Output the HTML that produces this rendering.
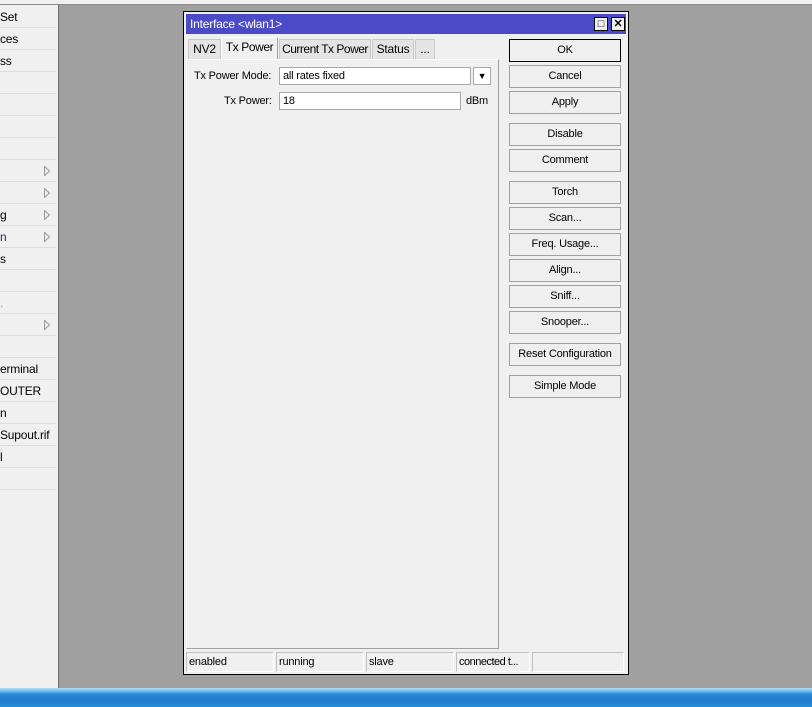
<!DOCTYPE html>
<html><head><style>
*{margin:0;padding:0;box-sizing:border-box}
body{width:812px;height:707px;overflow:hidden;background:#a0a0a0;font-family:"Liberation Sans",sans-serif;font-size:11px;letter-spacing:-0.2px;color:#000;position:relative}
.a{position:absolute;white-space:nowrap}
.side{left:0;top:5px;width:59px;height:683px;background:#f0f0f0;border-right:1px solid #6f6f6f}
.row{position:absolute;left:0;width:56px;height:22px;border-bottom:1px solid #dcdcdc;line-height:22px;white-space:nowrap;overflow:hidden;font-size:12px}
.arr{position:absolute;left:44px;top:6px;width:6px;height:10px}
.dlg{left:183px;top:11px;width:446px;height:664px;background:#f0f0f0;border:1px solid #000}
.title{left:2px;top:2px;width:440px;height:20px;background:#4b4bc8;color:#fff;line-height:20px;padding-left:4px;font-size:12px}
.tb{position:absolute;top:3px;width:14px;height:14px;background:#f0f0f0;border:1px solid #000;color:#000;font-size:11px;line-height:12px;text-align:center;font-weight:bold}
.tab{position:absolute;top:27px;height:20px;border:1px solid #c8c8c8;border-bottom:none;background:#e4e4e4;line-height:19px;text-align:center;white-space:nowrap;font-size:12px}
.panel{left:2px;top:47px;width:313px;height:590px;border:1px solid #a0a0a0;border-top:1px solid #fff;border-left:1px solid #fff;background:#f0f0f0}
.btn{position:absolute;left:325px;width:112px;height:23px;border:1px solid #a0a0a0;background:#efefef;text-align:center;line-height:21px;white-space:nowrap}
.in{position:absolute;height:18px;background:#fff;border:1px solid #a8a8a8;line-height:16px;padding-left:3px;white-space:nowrap}
.st{position:absolute;top:640px;height:20px;border:1px solid #c0c0c0;border-right-color:#fff;border-bottom-color:#fff;line-height:18px;padding-left:2px;white-space:nowrap;overflow:hidden}
.task{left:0;top:688px;width:812px;height:19px;background:linear-gradient(#b8d8f0 0,#6cc4ee 3px,#2a8ad8 6px,#1e78c8 12px,#2c90dc 19px)}
</style></head><body>
<div class="a" style="left:0;top:0;width:812px;height:5px;background:#f0f0f0;border-bottom:1px solid #8a8a8a"></div>
<div class="a side">
<div class="row" style="top:1px">Set</div>
<div class="row" style="top:23px">ces</div>
<div class="row" style="top:45px">ss</div>
<div class="row" style="top:67px"></div>
<div class="row" style="top:89px"></div>
<div class="row" style="top:111px"></div>
<div class="row" style="top:133px"></div>
<div class="row" style="top:155px"><svg class="arr" viewBox="0 0 6 10"><path d="M0.5 0v10M0.5 0.5L5.5 5L0.5 9.5" fill="none" stroke="#999"/></svg></div>
<div class="row" style="top:177px"><svg class="arr" viewBox="0 0 6 10"><path d="M0.5 0v10M0.5 0.5L5.5 5L0.5 9.5" fill="none" stroke="#999"/></svg></div>
<div class="row" style="top:199px">g<svg class="arr" viewBox="0 0 6 10"><path d="M0.5 0v10M0.5 0.5L5.5 5L0.5 9.5" fill="none" stroke="#999"/></svg></div>
<div class="row" style="top:221px;color:#1a2a8a">n<svg class="arr" viewBox="0 0 6 10"><path d="M0.5 0v10M0.5 0.5L5.5 5L0.5 9.5" fill="none" stroke="#999"/></svg></div>
<div class="row" style="top:243px">s</div>
<div class="row" style="top:265px"></div>
<div class="row" style="top:287px;color:#7ab">.</div>
<div class="row" style="top:309px"><svg class="arr" viewBox="0 0 6 10"><path d="M0.5 0v10M0.5 0.5L5.5 5L0.5 9.5" fill="none" stroke="#999"/></svg></div>
<div class="row" style="top:331px"></div>
<div class="row" style="top:353px">erminal</div>
<div class="row" style="top:375px">OUTER</div>
<div class="row" style="top:397px">n</div>
<div class="row" style="top:419px">Supout.rif</div>
<div class="row" style="top:441px">l</div>
<div class="row" style="top:463px"></div>
</div>
<div class="a dlg">
<div class="a title">Interface &lt;wlan1&gt;
<div class="tb" style="left:408px">&#9633;</div><div class="tb" style="left:425px">✕</div></div>
<div class="tab" style="left:4px;width:33px">NV2</div>
<div class="tab" style="left:37px;width:57px;top:25px;height:23px;background:#f0f0f0;border-color:#fff #a0a0a0 #f0f0f0 #fff;letter-spacing:-0.4px">Tx Power</div>
<div class="tab" style="left:95px;width:92px;letter-spacing:-0.5px">Current Tx Power</div>
<div class="tab" style="left:188px;width:42px">Status</div>
<div class="tab" style="left:231px;width:20px">...</div>
<div class="a panel">
<div class="a" style="left:7px;top:10px">Tx Power Mode:</div>
<div class="in" style="left:92px;top:7px;width:192px">all rates fixed</div>
<div class="in" style="left:286px;top:7px;width:18px;padding:0;text-align:center;font-size:9px">&#9660;</div>
<div class="a" style="left:37px;top:35px">Tx Power:</div>
<div class="in" style="left:92px;top:32px;width:182px">18</div>
<div class="a" style="left:279px;top:35px">dBm</div>
</div>
<div class="btn" style="top:27px;border:1px solid #000">OK</div>
<div class="btn" style="top:53px">Cancel</div>
<div class="btn" style="top:79px">Apply</div>
<div class="btn" style="top:111px">Disable</div>
<div class="btn" style="top:137px">Comment</div>
<div class="btn" style="top:169px">Torch</div>
<div class="btn" style="top:195px">Scan...</div>
<div class="btn" style="top:221px">Freq. Usage...</div>
<div class="btn" style="top:247px">Align...</div>
<div class="btn" style="top:273px">Sniff...</div>
<div class="btn" style="top:299px">Snooper...</div>
<div class="btn" style="top:331px">Reset Configuration</div>
<div class="btn" style="top:363px">Simple Mode</div>
<div class="st" style="left:2px;width:88px">enabled</div>
<div class="st" style="left:92px;width:88px">running</div>
<div class="st" style="left:182px;width:88px">slave</div>
<div class="st" style="left:272px;width:74px;letter-spacing:-0.5px">connected t...</div>
<div class="st" style="left:348px;width:92px"></div>
</div>
<div class="a task"></div>
</body></html>
